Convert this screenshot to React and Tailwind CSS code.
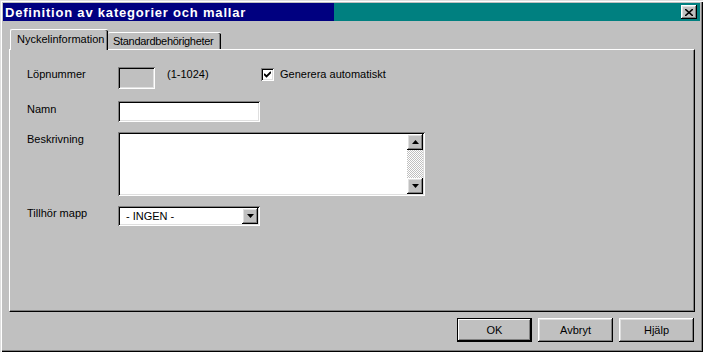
import React from "react";

const sunken =
  "shadow-[inset_1px_1px_#808080,inset_-1px_-1px_#fff,inset_2px_2px_#000,inset_-2px_-2px_#dfdfdf]";
const raised =
  "shadow-[inset_-1px_-1px_#000,inset_1px_1px_#fff,inset_-2px_-2px_#808080,inset_2px_2px_#dfdfdf]";

function Arrow({ up }) {
  return (
    <svg width="7" height="4" viewBox="0 0 7 4">
      <path d={up ? "M3.5 0 L7 4 L0 4 Z" : "M0 0 L7 0 L3.5 4 Z"} fill="#000" />
    </svg>
  );
}

function WinButton({ children, primary }) {
  return (
    <button
      className={
        "w-[75px] h-[24px] bg-[#c0c0c0] text-[11px] text-black flex items-center justify-center " +
        (primary
          ? "border border-black shadow-[inset_-1px_-1px_#000,inset_1px_1px_#fff,inset_-2px_-2px_#808080]"
          : raised)
      }
    >
      {children}
    </button>
  );
}

export default function App() {
  return (
    <div
      className="w-[703px] h-[352px] bg-[#c0c0c0] p-[3px] flex flex-col shadow-[inset_1px_1px_#dfdfdf,inset_2px_2px_#fff,inset_-1px_-1px_#000,inset_-2px_-2px_#808080] text-black"
      style={{ fontFamily: '"Liberation Sans", Arial, sans-serif' }}
    >
      {/* Title bar */}
      <div className="h-[18px] flex">
        <div className="w-[331px] bg-[#000080] flex items-center pl-[2px]">
          <span className="text-white font-bold text-[13px] tracking-[0.8px] leading-none">
            Definition av kategorier och mallar
          </span>
        </div>
        <div className="flex-1 bg-[#008080] flex items-center justify-end pr-[3px]">
          <div className={"w-[16px] h-[14px] bg-[#c0c0c0] flex items-center justify-center " + raised}>
            <svg width="8" height="7" viewBox="0 0 8 7">
              <path d="M0 0 L8 7 M8 0 L0 7" stroke="#000" strokeWidth="1.6" />
            </svg>
          </div>
        </div>
      </div>

      {/* Tabs + panel */}
      <div className="ml-[6px] mt-[8px] w-[686px] flex flex-col">
        <div className="flex items-end h-[20px] pl-[1px]">
          <div className="relative z-10 -mb-px h-[21px] w-[98px] bg-[#c0c0c0] rounded-t-[2px] border-l border-t border-white shadow-[inset_-1px_0_#000,inset_-2px_0_#808080] flex items-start pl-[6px] pt-[3px]">
            <span className="text-[11px] leading-[13px]">Nyckelinformation</span>
          </div>
          <div className="h-[17px] w-[113px] bg-[#c0c0c0] rounded-t-[2px] border-t border-white shadow-[inset_-1px_0_#000,inset_-2px_0_#808080] flex items-start pl-[5px] pt-[2px]">
            <span className="text-[11px] leading-[13px] tracking-[-0.3px]">Standardbehörigheter</span>
          </div>
        </div>

        <div className="h-[263px] border-t border-l border-white border-r border-b border-r-black border-b-black shadow-[inset_-1px_-1px_#808080] pt-[17px] pl-[17px] flex flex-col">
          {/* Row 1 */}
          <div className="flex items-start h-[22px]">
            <span className="w-[91px] text-[11px] leading-[13px] pt-[1px]">Löpnummer</span>
            <div className={"w-[37px] h-[22px] bg-[#c0c0c0] " + sunken} />
            <span className="ml-[12px] w-[94px] text-[11px] leading-[13px] pt-[1px]">(1-1024)</span>
            <div className={"mt-[1px] w-[13px] h-[13px] bg-white flex items-center justify-center " + sunken}>
              <svg width="7" height="7" viewBox="0 0 7 7">
                <path d="M0 3 L2.5 5.5 L7 1" stroke="#000" strokeWidth="1.8" fill="none" />
              </svg>
            </div>
            <span className="ml-[6px] text-[11px] leading-[13px] pt-[1px]">Generera automatiskt</span>
          </div>

          {/* Row 2 */}
          <div className="flex items-start mt-[12px]">
            <span className="w-[91px] text-[11px] leading-[13px] pt-[2px]">Namn</span>
            <div className={"w-[142px] h-[21px] bg-white " + sunken} />
          </div>

          {/* Row 3 */}
          <div className="flex items-start mt-[10px]">
            <span className="w-[91px] text-[11px] leading-[13px] pt-[1px]">Beskrivning</span>
            <div className={"w-[307px] h-[64px] bg-white p-[2px] flex justify-end " + sunken}>
              <div className="w-[16px] h-full flex flex-col bg-[repeating-conic-gradient(#c0c0c0_0_25%,#fff_0_50%)] bg-[length:2px_2px]">
                <div className={"w-[16px] h-[16px] bg-[#c0c0c0] flex items-center justify-center " + raised}>
                  <Arrow up />
                </div>
                <div className="flex-1" />
                <div className={"w-[16px] h-[16px] bg-[#c0c0c0] flex items-center justify-center " + raised}>
                  <Arrow />
                </div>
              </div>
            </div>
          </div>

          {/* Row 4 */}
          <div className="flex items-start mt-[10px]">
            <span className="w-[91px] text-[11px] leading-[13px] pt-[1px]">Tillhör mapp</span>
            <div className={"w-[142px] h-[20px] bg-white p-[2px] flex items-center " + sunken}>
              <span className="flex-1 pl-[6px] text-[11px] leading-[13px]">- INGEN -</span>
              <div className={"w-[16px] h-[16px] bg-[#c0c0c0] flex items-center justify-center " + raised}>
                <Arrow />
              </div>
            </div>
          </div>
        </div>
      </div>

      {/* Buttons */}
      <div className="flex justify-end gap-[6px] mt-[6px] mr-[6px]">
        <WinButton primary>OK</WinButton>
        <WinButton>Avbryt</WinButton>
        <WinButton>Hjälp</WinButton>
      </div>
    </div>
  );
}
